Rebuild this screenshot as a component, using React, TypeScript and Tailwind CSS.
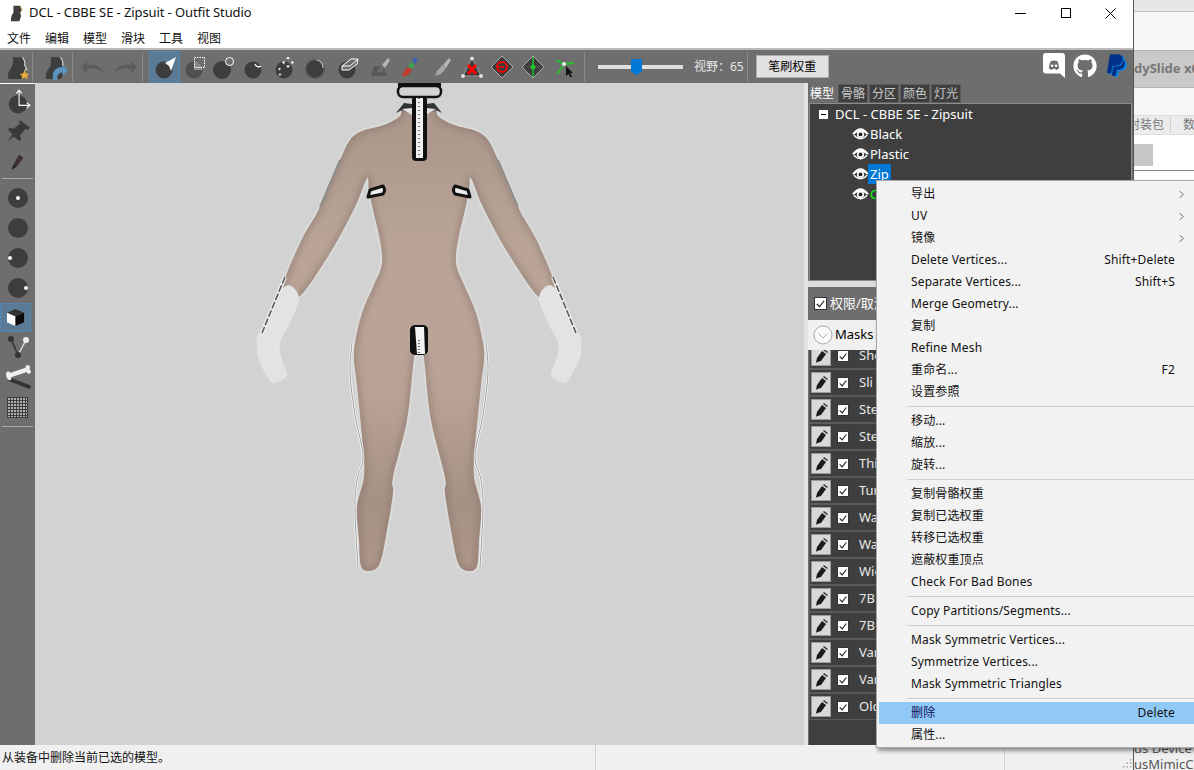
import { FaGithub, FaPaypal } from "react-icons/fa";

const menuBar = ["文件", "编辑", "模型", "滑块", "工具", "视图"];
const tabs = ["模型", "骨骼", "分区", "颜色", "灯光"];
const shapes = [
  { name: "Black", cls: "text-white" },
  { name: "Plastic", cls: "text-white" },
  { name: "Zip", cls: "text-white bg-[#0078d7]" },
  { name: "C", cls: "text-[#00ff00]" },
];
const sliders = ["Sho", "Sli", "Ste", "Ste", "Thi", "Tur", "Wa", "Wa", "Wic", "7B", "7B", "Var", "Var", "Old"];

type MenuRow = { label?: string; key?: string; sub?: boolean; hot?: boolean };
const contextMenu: MenuRow[] = [
  { label: "导出", sub: true },
  { label: "UV", sub: true },
  { label: "镜像", sub: true },
  { label: "Delete Vertices...", key: "Shift+Delete" },
  { label: "Separate Vertices...", key: "Shift+S" },
  { label: "Merge Geometry..." },
  { label: "复制" },
  { label: "Refine Mesh" },
  { label: "重命名...", key: "F2" },
  { label: "设置参照" },
  {},
  { label: "移动..." },
  { label: "缩放..." },
  { label: "旋转..." },
  {},
  { label: "复制骨骼权重" },
  { label: "复制已选权重" },
  { label: "转移已选权重" },
  { label: "遮蔽权重顶点" },
  { label: "Check For Bad Bones" },
  {},
  { label: "Copy Partitions/Segments..." },
  {},
  { label: "Mask Symmetric Vertices..." },
  { label: "Symmetrize Vertices..." },
  { label: "Mask Symmetric Triangles" },
  {},
  { label: "删除", key: "Delete", hot: true },
  { label: "属性..." },
];

const Disc = ({ fill = "#3d3d3d" }: { fill?: string }) => <circle cx="11" cy="15" r="8.5" fill={fill} />;

const Brush = ({ color = "#8c8c8c" }: { color?: string }) => (
  <>
    <path d="M14 10 20 3l2 2-5 8z" fill="#b5b5b5" />
    <path d="M13 10l4 3-3 4-6 1z" fill={color} />
  </>
);

const Profile = () => (
  <path d="M8 3h9c2 3 3 5 2 7l2 4-2 1v6l-2 2H4c-1-4 0-7 2-9 2-3 3-6 2-11z" fill="#3d3d3d" />
);

const toolbarIcons = [
  <><Disc /><path d="M23 2 12 8l4 3 2 5z" fill="#fff" /></>,
  <><Disc fill="#505050" /><path d="M11 6.500c4.500 0 8.500 4 8.500 8.500H11z" fill="#8a8a8a" /><rect x="11.500" y="2.500" width="10" height="10" fill="none" stroke="#fff" strokeDasharray="1.500 1" /></>,
  <><circle cx="10" cy="15" r="9" fill="#3d3d3d" /><circle cx="17.500" cy="6.500" r="4" fill="#6e6e6e" stroke="#fff" /></>,
  <><Disc /><path d="M13 9c1 3 4 3.500 6 2" fill="none" stroke="#fff" strokeWidth="1.200" /></>,
  <><Disc /><path d="M15 1.500l2 2.500h-4zM15 13l2-2.500h-4zM9 7.500l2.500-2v4zM21 7.500l-2.500-2v4zM5 13l3 .5-1.500 2zM7 21l1.500-2.500-3 .5z" fill="#fff" /></>,
  <><circle cx="11" cy="14" r="8.500" fill="#3d3d3d" stroke="#3d3d3d" strokeWidth="2.500" strokeDasharray="1 1.200" /><path d="M13 5c4 1 6 4 6 8" fill="none" stroke="#ddd" /></>,
  <><Disc /><path d="M6 11l9-7h7l-1 5-8 6H6z" fill="#6e6e6e" stroke="#fff" /><path d="M6 11h8l7-6" fill="none" stroke="#fff" /></>,
  <><path d="M3 21 6 11h9l4 10z" fill="#585858" /><Brush color="#6a6a6a" /></>,
  <><path d="M16 2l4 3-3 4-3-3z" fill="#3f62b5" /><path d="M13 7l4 3-3 4-4-3z" fill="#3fa34f" /><path d="M10 12l4 3-4 5-6 2 2-6z" fill="#c0392b" /></>,
  <><Brush color="#a5a5a5" /><path d="M12 12l3 3-3 4-6 2 2-5z" fill="#a5a5a5" /></>,
  <><path d="M12 3 21 21H3z" fill="#3d3d3d" stroke="#999" /><path d="M8 10l8 9M16 10l-8 9" stroke="#f00" strokeWidth="3" /><circle cx="12" cy="3.500" r="2" fill="#ddd" /><circle cx="3" cy="21" r="2" fill="#ddd" /><circle cx="21" cy="21" r="2" fill="#ddd" /></>,
  <><path d="M12 1 23 12 12 23 1 12z" fill="#3d3d3d" stroke="#aaa" /><path d="M7 12a5 5 0 0 1 10 0M17 12a5 5 0 0 1-10 0" fill="none" stroke="#f00" strokeWidth="1.800" /><path d="M7 12h7" stroke="#f00" strokeWidth="1.500" /></>,
  <><path d="M12 1 23 12 12 23 1 12z" fill="#3d3d3d" stroke="#aaa" /><path d="M12 2v20" stroke="#22c32a" strokeWidth="1.500" /><path d="M3 12h18" stroke="#555" /><circle cx="12" cy="12" r="2.500" fill="#22c32a" /></>,
  <><path d="M4 5l8 4 10-1M12 9l-7 10" fill="none" stroke="#22c32a" strokeWidth="1.800" /><circle cx="12" cy="9" r="2" fill="#eee" /><path d="M14 11v10l2.500-2 2 3.500 1.500-1-2-3.500h3z" fill="#111" /></>,
];

const toolbarSlots = ["w-[31px]", "w-[29px]", "w-[30px]", "w-[30px]", "w-[31px]", "w-[32px]", "w-[32px]", "w-[31px]", "w-[30px]", "w-[31px]", "w-[31px]", "w-[30px]", "w-[31px]", "w-[32px]"];

const Sep = () => <div className="w-px h-[30px] bg-[#3a3a3a] border-r border-[#8a8a8a] shrink-0" />;

const sideIcons = [
  <><circle cx="12" cy="15" r="8.500" fill="#3d3d3d" /><path d="M13 2v14h10M10.500 5 13 2l2.500 3M20 13.500l3 2.500-3 2.500" fill="none" stroke="#fff" /></>,
  <path d="M14 2l9 7-2 2-2-1-5 6 1 4-2 1-5-4-6 5 5-7-4-4 1-2 4 1 6-5-1-2z" fill="#3a3a3a" />,
  <><path d="M13 6l4 3-6 8-3-2z" fill="#3d3030" /><path d="M14 5l1-1 4 3-1 2z" fill="#777" /><path d="M8 15l3 2-5 3z" fill="#222" /></>,
];

const Pencil = () => (
  <svg viewBox="0 0 16 16" className="w-4 h-4">
    <path d="M9 3l4 3-5 7-4 1 0-4z" fill="#1c1c1c" />
    <path d="M10 2l1-1 4 3-1 1z" fill="#333" />
    <path d="M4 10l2.500 2L3 15z" fill="#111" />
  </svg>
);

const Check = ({ size = "w-[13px] h-[13px]" }: { size?: string }) => (
  <span className={`${size} bg-white border border-[#333] flex items-center justify-center shrink-0`}>
    <svg viewBox="0 0 12 12" className="w-full h-full">
      <path d="M2 6.500 5 9.500 10 3" fill="none" stroke="#222" strokeWidth="1.300" />
    </svg>
  </span>
);

const Eye = () => (
  <svg viewBox="0 0 18 12" className="w-[17px] h-[12px] shrink-0">
    <path d="M0 6c3-4 6-6 9-6s6 2 9 6c-1 .5-2 .5-3 0-1-1-3-2-6-2S4 5 3 6c-1 .5-2 .5-3 0z" fill="#fff" />
    <path d="M2 7c2 3 4 4 7 4s5-1 7-4" fill="none" stroke="#fff" strokeWidth="1.500" />
    <circle cx="9" cy="6.500" r="3.800" fill="#fff" />
    <circle cx="9" cy="6.500" r="2" fill="#222" />
  </svg>
);

// outline through the points, catmull-rom turned into beziers
const smooth = (pts: number[][], closed: boolean) => {
  const n = pts.length;
  const at = (i: number) => (closed ? pts[(i + n) % n] : pts[Math.max(0, Math.min(n - 1, i))]);
  let d = `M${pts[0][0]} ${pts[0][1]}`;
  for (let i = 0; i < (closed ? n : n - 1); i++) {
    const [p0, p1, p2, p3] = [at(i - 1), at(i), at(i + 1), at(i + 2)];
    const c1 = [p1[0] + (p2[0] - p0[0]) / 6, p1[1] + (p2[1] - p0[1]) / 6];
    const c2 = [p2[0] - (p3[0] - p1[0]) / 6, p2[1] - (p3[1] - p1[1]) / 6];
    d += ` C${c1[0].toFixed(1)} ${c1[1].toFixed(1)} ${c2[0].toFixed(1)} ${c2[1].toFixed(1)} ${p2[0]} ${p2[1]}`;
  }
  return closed ? d + " Z" : d;
};

// left half of the mannequin, mirrored about x=419
const leftSide = [
  [404, 106], [400, 116], [384, 125], [362, 131], [350, 140], [340, 160], [328, 188], [317, 213], [300, 243], [283, 288],
  [298, 298], [330, 253], [355, 207], [367, 178], [369, 190], [373, 210], [379, 235], [382, 255], [381, 268], [373, 287],
  [362, 313], [355, 343], [354, 360], [357, 385], [363, 447], [364, 477], [357, 507], [359, 540], [361, 566], [370, 571],
  [380, 563], [387, 530], [393, 493], [393, 477], [407, 420], [413, 367], [415, 355],
];
const bodyPath = smooth([...leftSide, ...[...leftSide].reverse().map(([x, y]) => [838 - x, y])], true);
const glovePath = smooth(
  [[284, 287], [299, 297], [290, 323], [280, 343], [282, 360], [287, 375], [275, 383], [268, 378], [258, 358], [257, 345], [259, 333]],
  true,
);
const legStrip = smooth([[352, 342], [350, 373], [355, 415], [363, 456], [357, 480], [355, 510], [358, 568]], false);

const Mannequin = () => (
  <svg viewBox="35 83 769 662" className="block w-full h-full">
    <defs>
      <linearGradient id="skin" x1="0" y1="0" x2="0" y2="1">
        <stop offset="0" stopColor="#a89488" />
        <stop offset="0.3" stopColor="#baa498" />
        <stop offset="0.62" stopColor="#b9a296" />
        <stop offset="0.85" stopColor="#a69185" />
        <stop offset="1" stopColor="#ad968a" />
      </linearGradient>
      <clipPath id="bodyClip"><path d={bodyPath} /></clipPath>
      <filter id="soft" x="-20%" y="-20%" width="140%" height="140%"><feGaussianBlur stdDeviation="3" /></filter>
    </defs>
    <path d={bodyPath} fill="none" stroke="#dadada" strokeWidth="4" />
    <path d={bodyPath} fill="url(#skin)" />
    <g clipPath="url(#bodyClip)">
      <path d={bodyPath} fill="none" stroke="#7a675c" strokeWidth="5" filter="url(#soft)" opacity="0.5" />
    </g>
    {[false, true].map((mirror) => (
      <g key={String(mirror)} transform={mirror ? "translate(838 0) scale(-1 1)" : undefined}>
        <path d="M340 160 L320 207" stroke="#8f8f8f" strokeWidth="2" fill="none" />
        <path d={glovePath} fill="#e3e3e3" />
        <path d="M285 277 L262 333" stroke="#ececec" strokeWidth="4" fill="none" />
        <path d="M285 277 L262 333" stroke="#555" strokeWidth="1.500" strokeDasharray="7 2" fill="none" />
        <path d={legStrip} fill="none" stroke="#f8f8f8" strokeWidth="2.500" />
        <path d={legStrip} fill="none" stroke="#777" strokeWidth="0.700" />
        <path d="M383 186 L370 190 L368 197 L383 194 Q386 190 383 186 Z" fill="#eee" stroke="#111" strokeWidth="3" strokeLinejoin="round" />
        <path d="M404 103 L396 113 L402 110 L412 114 L412 104 Z" fill="#333" />
        <path d="M402 109 L412 115 L412 108 Z" fill="#e4e4e4" />
      </g>
    ))}
    <rect x="398" y="86" width="43" height="11" rx="5" fill="#d2d2d2" stroke="#111" strokeWidth="2.500" />
    <rect x="398" y="83" width="43" height="4" fill="#111" />
    <rect x="412" y="96" width="15" height="65" rx="4" fill="#111" />
    <rect x="416" y="98" width="7" height="60" fill="#eee" />
    <path d="M419 98v60" stroke="#555" strokeWidth="1.500" strokeDasharray="1 3" />
    <rect x="410" y="325" width="18" height="30" rx="5" fill="#111" />
    <path d="M415 327h9l1 27h-8z" fill="#f4f4f4" />
    <path d="M419 340v14" stroke="#333" strokeWidth="1.500" strokeDasharray="1 2" />
  </svg>
);

export default function App() {
  return (
    <div className="relative w-[1194px] h-[770px] overflow-hidden flex bg-[#f5f5f5] text-xs font-['Noto_Sans','Noto_Sans_CJK_SC',sans-serif]">
      <div className="w-[1134px] h-full flex flex-col border-r border-[#555] shrink-0">
        {/* title bar */}
        <div className="h-[26px] bg-white flex items-center shrink-0">
          <svg viewBox="0 0 16 20" className="w-[14px] h-[17px] ml-[9px] mr-[6px]">
            <path d="M5 1h8l2 5-2 3 1 4-2 6H2c0-5 1-8 3-10z" fill="#3d3d3d" />
            <path d="M13 1l2 5-2 3" fill="none" stroke="#e0b060" />
          </svg>
          <span className="text-[13px] tracking-[-0.1px] text-[#111]">DCL - CBBE SE - Zipsuit - Outfit Studio</span>
          <div className="ml-auto flex items-center">
            <div className="w-[45px] flex justify-center"><div className="w-[11px] h-px bg-black" /></div>
            <div className="w-[45px] flex justify-center"><div className="w-[10px] h-[10px] border border-black" /></div>
            <div className="w-[45px] flex justify-center">
              <svg viewBox="0 0 11 11" className="w-[11px] h-[11px]"><path d="M.5.5l10 10M10.500.5l-10 10" stroke="#000" /></svg>
            </div>
          </div>
        </div>
        {/* menu bar */}
        <div className="h-[24px] bg-white flex items-center gap-[14px] pl-[7px] pt-[3px] border-b-2 border-[#bcbcbc] shrink-0 text-[#111]">
          {menuBar.map((m) => <span key={m}>{m}</span>)}
        </div>
        {/* toolbar */}
        <div className="h-[33px] bg-[#6e6e6e] flex items-center shrink-0">
          <svg viewBox="0 0 24 24" className="w-[26px] h-[26px] ml-[4px] mr-[2px]">
            <Profile />
            <path d="M17 3c2 3 3 5 2 7l2 4-2 1" fill="none" stroke="#ddd" />
            <path d="M19 15l1.500 3 3 .4-2.200 2 .6 3-2.900-1.600-2.800 1.600.5-3-2.200-2 3-.4z" fill="#e9a93b" />
          </svg>
          <Sep />
          <svg viewBox="0 0 24 24" className="w-[26px] h-[26px] ml-[9px] mr-[4px]">
            <Profile />
            <path d="M17 3c2 3 3 5 2 7l2 4-2 1" fill="none" stroke="#ddd" />
            <path d="M10 24v-4c0-5 4-8 9-8v-2l5 5-5 5v-3c-3 0-5 2-5 7z" fill="#5b93bd" />
          </svg>
          <Sep />
          <svg viewBox="0 0 26 16" className="w-[26px] h-[16px] ml-[7px] mr-[6px]">
            <path d="M1 8l6-6v4c8-1 14 1 17 8-5-5-10-5-17-4v4z" fill="#5c5c5c" />
          </svg>
          <svg viewBox="0 0 26 16" className="w-[26px] h-[16px] mr-[4px]">
            <path d="M25 8l-6-6v4C11 5 5 7 2 14c5-5 10-5 17-4v4z" fill="#5c5c5c" />
          </svg>
          <Sep />
          <div className="flex ml-[6px] mr-[4px]">
            {toolbarIcons.map((icon, i) => (
              <div
                key={i}
                className={`${toolbarSlots[i]} h-[32px] flex items-center justify-center ${i === 0 ? "bg-[#5b7a96] border border-[#4f86b3]" : ""}`}
              >
                <svg viewBox="0 0 24 24" className="w-6 h-6">{icon}</svg>
              </div>
            ))}
          </div>
          <Sep />
          <div className="relative w-[85px] h-[4px] bg-[#dedede] ml-[13px]">
            <div className="absolute left-[33px] -top-[6px] w-[11px] h-[17px] bg-[#0078d7] [clip-path:polygon(0_0,100%_0,100%_75%,50%_100%,0_75%)]" />
          </div>
          <span className="ml-[11px] text-[#e6e6e6]">视野：65</span>
          <div className="ml-[3px]"><Sep /></div>
          <div className="ml-[8px] w-[73px] h-[23px] bg-[#e1e1e1] border border-[#adadad] text-black flex items-center justify-center">笔刷权重</div>
          <div className="ml-auto flex items-center self-start pt-[3px]">
            <svg viewBox="0 0 22 25" className="w-[22px] h-[25px] mr-[8px]">
              <path d="M3 0h16a3 3 0 0 1 3 3v22l-5-4.500H3a3 3 0 0 1-3-3V3a3 3 0 0 1 3-3z" fill="#fff" />
              <path d="M6 15.500c0-3.500 1-6 2-7.500 2-.8 4-.8 6 0 1 1.500 2 4 2 7.500-1 .8-2 1.300-3 1.400l-.8-1.200h-2.400l-.8 1.200c-1-.1-2-.6-3-1.400z" fill="#6e6e6e" />
              <circle cx="9" cy="12.800" r="1.300" fill="#fff" />
              <circle cx="13" cy="12.800" r="1.300" fill="#fff" />
            </svg>
            <FaGithub className="w-[24px] h-[24px] text-white mr-[9px]" />
            <div className="relative w-[22px] h-[25px] mr-[5px]">
              <FaPaypal className="absolute left-[2px] top-[1px] w-[20px] h-[24px] text-[#0a84e0]" />
              <FaPaypal className="absolute left-0 top-0 w-[20px] h-[24px] text-[#003087]" />
            </div>
          </div>
        </div>

        {/* body */}
        <div className="flex-1 flex min-h-0">
          <div className="w-[35px] bg-[#6e6e6e] flex flex-col items-center border-t border-white shrink-0">
            {sideIcons.map((icon, i) => (
              <div key={i} className="h-[30px] w-full flex items-center justify-center first:mt-[2px]">
                <svg viewBox="0 0 24 24" className="w-[26px] h-[26px]">{icon}</svg>
              </div>
            ))}
            <div className="w-[31px] h-px bg-[#a8a8a8] mt-[2px] mb-[4px]" />
            {[[10, 10], [10, 10], [2, 10], [18, 10]].map(([x, y], i) => (
              <div key={i} className="h-[30px] w-full flex items-center justify-center">
                <svg viewBox="0 0 20 20" className="w-[20px] h-[20px]">
                  <circle cx="10" cy="10" r="10" fill="#3d3d3d" />
                  {i !== 1 && <circle cx={x} cy={y} r="2" fill="#fff" />}
                </svg>
              </div>
            ))}
            <div className="w-[31px] h-[29px] self-start bg-[#5b7a96] border border-[#4f86b3] flex items-center justify-center">
              <svg viewBox="0 0 20 20" className="w-[19px] h-[19px]">
                <path d="M10 1l9 4-9 4-9-4z" fill="#333" />
                <path d="M1 5l9 4v10l-9-4z" fill="#fff" />
                <path d="M19 5l-9 4v10l9-4z" fill="#0c0c0c" />
              </svg>
            </div>
            <div className="h-[30px] w-full flex items-center justify-center">
              <svg viewBox="0 0 24 24" className="w-6 h-6">
                <path d="M5 4l7 16" stroke="#333" strokeWidth="1.500" />
                <path d="M20 5l-8 15" stroke="#ddd" strokeWidth="1.500" />
                <circle cx="5" cy="4" r="3" fill="#333" />
                <circle cx="12" cy="20" r="3" fill="#333" />
                <circle cx="20" cy="5" r="3" fill="#eee" />
              </svg>
            </div>
            <div className="h-[30px] w-full flex items-center justify-center">
              <svg viewBox="0 0 24 24" className="w-[26px] h-[26px]">
                <path d="M4 14l18 7" stroke="#333" strokeWidth="3.500" strokeLinecap="round" />
                <path d="M3 11l18-6" stroke="#eee" strokeWidth="4" strokeLinecap="round" />
                <circle cx="3" cy="9" r="2" fill="#eee" /><circle cx="4" cy="13" r="2" fill="#eee" />
                <circle cx="21" cy="3" r="2" fill="#eee" /><circle cx="22" cy="7" r="2" fill="#eee" />
              </svg>
            </div>
            <div className="h-[30px] w-full flex items-center justify-center">
              <svg viewBox="0 0 21 21" className="w-[21px] h-[21px]">
                <rect width="21" height="21" fill="#b0b0b0" />
                <path d="M.5 0v21M3.500 0v21M6.500 0v21M9.500 0v21M12.500 0v21M15.500 0v21M18.500 0v21M20.500 0v21M0 .5h21M0 3.500h21M0 6.500h21M0 9.500h21M0 12.500h21M0 15.500h21M0 18.500h21M0 20.500h21" stroke="#3d3d3d" />
              </svg>
            </div>
            <div className="w-[31px] h-px bg-[#a8a8a8] mt-[4px]" />
          </div>

          <div className="w-[769px] bg-[#d2d2d2] shrink-0"><Mannequin /></div>
          <div className="w-[4px] bg-[#e3e3e3] shrink-0" />

          {/* right panel */}
          <div className="flex-1 flex flex-col min-w-0">
            <div className="h-[198px] bg-[#6e6e6e] flex flex-col px-px shrink-0">
              <div className="h-[20px] flex items-end gap-px -ml-[2px] shrink-0">
                {tabs.map((t, i) => (
                  <span
                    key={t}
                    className={`h-[19px] w-[30px] flex items-center justify-center ${i === 0 ? "text-white" : "bg-[#3f3f3f] text-[#c8c8c8] border border-[#5c5c5c]"}`}
                  >
                    {t}
                  </span>
                ))}
              </div>
              <div className="flex-1 bg-[#3f3f3f] border border-[#8c8c8c] text-white text-[13px] leading-[20px]">
                <div className="flex items-center h-[20px] pl-[9px]">
                  <span className="w-[9px] h-[9px] bg-white flex items-center justify-center mr-[7px]">
                    <span className="w-[5px] h-px bg-black" />
                  </span>
                  DCL - CBBE SE - Zipsuit
                </div>
                {shapes.map((s) => (
                  <div key={s.name} className="flex items-center h-[20px] pl-[42px]">
                    <Eye />
                    <span className={`${s.cls} px-[2px] h-[20px] -ml-[1px]`}>{s.name}</span>
                  </div>
                ))}
              </div>
            </div>
            <div className="h-[6px] bg-[#dcdcdc] shrink-0" />
            <div className="flex-1 bg-[#6e6e6e] flex flex-col min-h-0">
              <div className="h-[33px] flex items-center pl-[6px] gap-[3px] text-white shrink-0 overflow-hidden">
                <Check size="w-[13px] h-[13px]" />
                <span className="text-[13px]">权限/取消</span>
              </div>
              <div className="h-[30px] bg-[#f0f0f0] flex items-center pl-[5px] gap-[2px] text-[13px] text-black shrink-0">
                <svg viewBox="0 0 20 20" className="w-[20px] h-[20px]">
                  <circle cx="10" cy="10" r="9" fill="#fafafa" stroke="#a8a8a8" />
                  <path d="M5.500 8.500 10 13l4.500-4.500" fill="none" stroke="#a8a8a8" />
                </svg>
                Masks
              </div>
              <div className="flex-1 bg-[#3f3f3f] overflow-hidden ml-px min-h-0">
                <div className="-mt-[8px]">
                  {sliders.map((s, i) => (
                    <div key={i} className="h-[27px] flex items-center border border-[#5a5a5a] text-[13px] text-[#e8e8e8]">
                      <span className="w-[20px] h-[21px] bg-[#d8d8d8] border border-[#9a9a9a] flex items-center justify-center ml-px shrink-0">
                        <Pencil />
                      </span>
                      <span className="ml-[6px]"><Check size="w-[12px] h-[12px]" /></span>
                      <span className="ml-[10px]">{s}</span>
                    </div>
                  ))}
                </div>
              </div>
            </div>
          </div>
        </div>

        {/* status bar */}
        <div className="h-[25px] bg-[#f0f0f0] flex items-center text-[#111] shrink-0">
          <span className="w-[596px] pl-[2px] border-r border-[#d0d0d0] h-full flex items-center">从装备中删除当前已选的模型。</span>
          <span className="w-[409px] border-r border-[#d0d0d0] h-full" />
          <div className="ml-auto self-end pb-[2px] pr-px">
            <svg viewBox="0 0 10 10" className="w-[10px] h-[10px]">
              <path d="M8 1h1.500v1.500H8zM4.500 4.500H6V6H4.500zM8 4.500h1.500V6H8zM1 8h1.500v1.500H1zM4.500 8H6v1.500H4.500zM8 8h1.500v1.500H8z" fill="#a5a5a5" />
            </svg>
          </div>
        </div>
      </div>

      {/* the window behind, only a strip of it shows */}
      <div className="flex-1 min-w-0 flex flex-col overflow-hidden text-[#777]">
        <div className="h-[12px] bg-[#e6e6e6] border-b border-[#c4c4c4] shrink-0" />
        <div className="h-[38px] bg-[#f6f6f6] shrink-0" />
        <div className="h-[38px] bg-[#c9c9c9] border-y border-[#b4b4b4] flex items-center font-bold text-[13px] whitespace-nowrap shrink-0">
          dySlide x64
        </div>
        <div className="h-[27px] bg-[#f6f6f6] shrink-0" />
        <div className="h-[20px] bg-[#ececec] flex items-center whitespace-nowrap shrink-0 border-y border-[#dcdcdc]">
          <span className="w-[41px] border-r border-[#cfcfcf] -ml-[6px] pr-[6px] box-content">封装包</span>
          <span className="pl-[12px]">数</span>
        </div>
        <div className="flex-1 bg-white pt-[9px]">
          <div className="w-[19px] h-[22px] bg-[#c6c6c6]" />
          <div className="h-px bg-[#888] mt-[4px]" />
        </div>
        <div className="h-[30px] bg-[#f0f0f0] text-[#555] whitespace-nowrap text-[13px] leading-[16px] shrink-0">
          <div>us Device</div>
          <div>usMimicCl</div>
        </div>
      </div>

      {/* context menu */}
      <div className="absolute left-[876px] top-[180px] w-[330px] h-[568px] bg-[#f2f2f2] border border-[#a8a8a8] pt-[2px] shadow-[2px_3px_4px_rgba(0,0,0,0.4)] text-[#111] tracking-[0.15px]">
        {contextMenu.map((row, i) =>
          row.label ? (
            <div key={i} className={`h-[22px] flex items-center ml-[2px] w-[315px] pl-[32px] pr-[19px] ${row.hot ? "bg-[#90c8f6]" : ""}`}>
              <span className={row.hot ? "text-[#101060]" : ""}>{row.label}</span>
              {row.key && <span className="ml-auto">{row.key}</span>}
              {row.sub && (
                <svg viewBox="0 0 6 10" className="w-[5px] h-[9px] ml-auto -mr-[9px]">
                  <path d="M1 1l4 4-4 4" fill="none" stroke="#444" />
                </svg>
              )}
            </div>
          ) : (
            <div key={i} className="h-[7px] flex items-center ml-[30px] w-[287px]">
              <div className="w-full h-px bg-[#d0d0d0]" />
            </div>
          ),
        )}
      </div>
    </div>
  );
}
